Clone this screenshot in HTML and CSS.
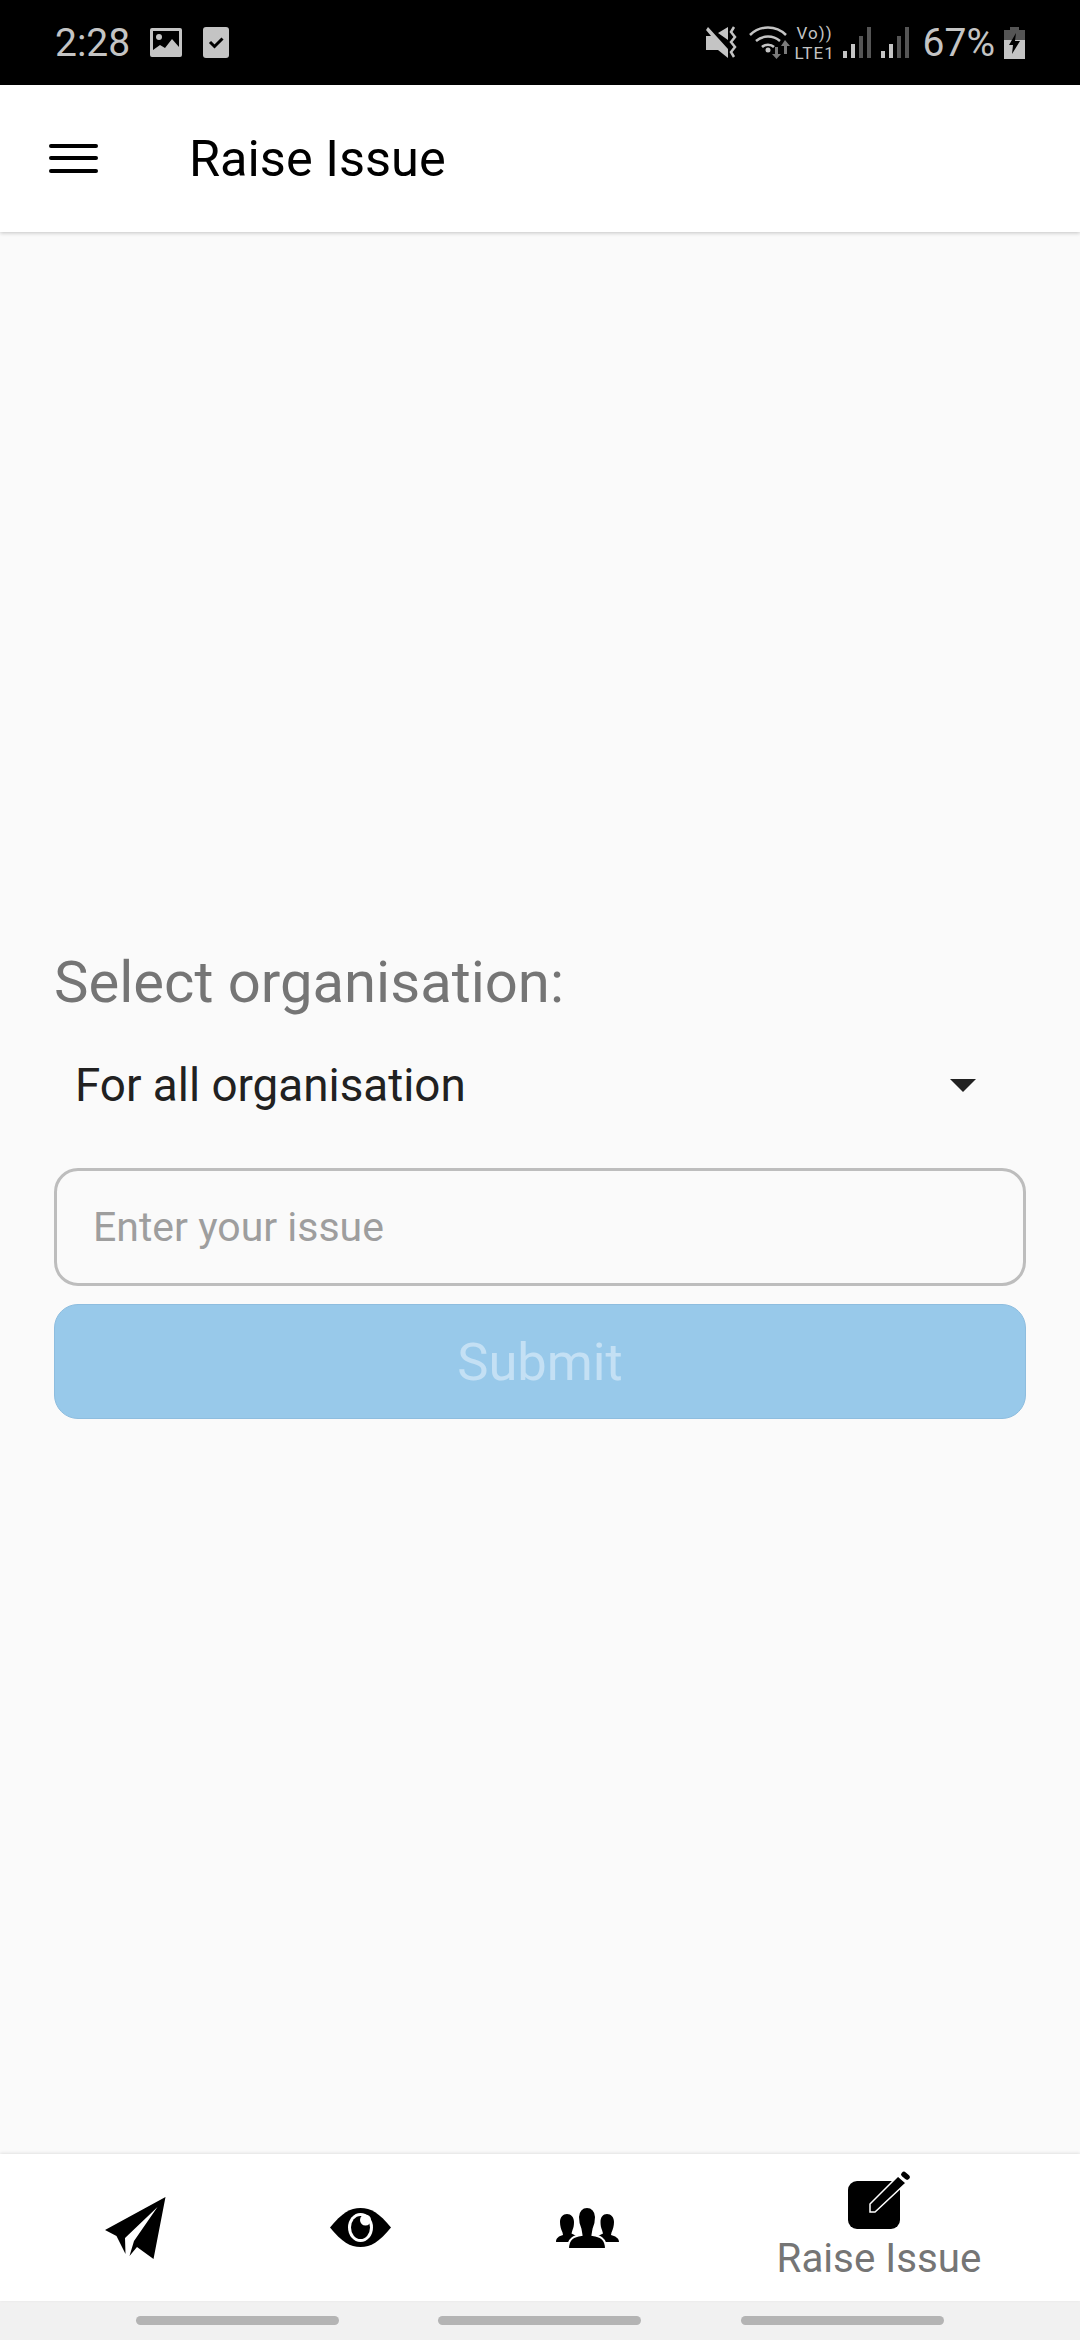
FILE: index.html
```html
<!DOCTYPE html>
<html lang="en">
<head>
  <meta charset="UTF-8">
  <title>Raise Issue</title>
  <meta name="viewport" content="width=device-width, initial-scale=1.0">
  <link rel="stylesheet" href="styles.css">
</head>
<body>

  <div class="status-bar">
    <div class="status-left">
      <span class="time">2:28</span>
      <svg class="ic-image" width="32" height="29" viewBox="0 0 32 29">
        <path fill-rule="evenodd" fill="#c4c4c4" d="M2 0h28a2 2 0 0 1 2 2v25a2 2 0 0 1-2 2H2a2 2 0 0 1-2-2V2a2 2 0 0 1 2-2zM3 3v19l7-5 5 3 7-9 7 8V3z"/>
        <circle cx="9" cy="9" r="3" fill="#c4c4c4"/>
      </svg>
      <svg class="ic-task" width="26" height="31" viewBox="0 0 26 31">
        <rect width="26" height="31" rx="3" fill="#c4c4c4"/>
        <path d="M7 15l4.500 4.500L19.500 11.500" fill="none" stroke="#000" stroke-width="3"/>
      </svg>
    </div>
    <div class="status-right">
      <svg class="ic-mute" width="33" height="33" viewBox="0 0 33 33">
        <path fill="#c4c4c4" d="M2 1l20 22v9l-10-8H0V10h5L0 4zM22 1v13L12 7z"/>
        <path d="M28 1l-3 5 4 5-4 5 4 5-4 5 3 5" fill="none" stroke="#c4c4c4" stroke-width="2.500"/>
      </svg>
      <svg class="ic-wifi" width="42" height="33" viewBox="0 0 42 33">
        <path d="M1 9c10-10 26-10 36 0M7 15c7-6 17-6 24 0M13 21c3-3 9-3 12 0" fill="none" stroke="#c4c4c4" stroke-width="2.500"/>
        <circle cx="19" cy="24" r="2.500" fill="#c4c4c4"/>
        <path fill="#7a7a7a" d="M26 21h3v7h3l-4.500 5-4.500-5h3zM36 14l5 6h-3v8h-3v-8h-3z"/>
      </svg>
      <div class="volte"><span>Vo))</span><span>LTE1</span></div>
      <div class="signal">
        <i class="bar-on bar-1"></i><i class="bar-on bar-2"></i><i class="bar-off bar-3"></i><i class="bar-off bar-4"></i>
      </div>
      <div class="signal">
        <i class="bar-on bar-1"></i><i class="bar-on bar-2"></i><i class="bar-off bar-3"></i><i class="bar-off bar-4"></i>
      </div>
      <span class="battery-text">67%</span>
      <svg class="ic-battery" width="21" height="32" viewBox="0 0 21 32">
        <path fill="#555" d="M6 0h9v3h6v10H0V3h6z"/>
        <path fill="#c4c4c4" d="M0 13h21v19H0z"/>
        <path fill="#000" d="M12 6L5 18h4l-1 9 8-13h-5z"/>
      </svg>
    </div>
  </div>

  <header class="app-bar">
    <div class="menu-icon"><span></span><span></span><span></span></div>
    <h1 class="app-title">Raise Issue</h1>
  </header>

  <main class="content">
    <label class="org-label">Select organisation:</label>
    <div class="org-select">
      <span>For all organisation</span>
      <i class="arrow"></i>
    </div>
    <input class="issue-input" type="text" placeholder="Enter your issue">
    <button class="submit-btn" disabled>Submit</button>
  </main>

  <nav class="bottom-nav">
    <div class="nav-item">
      <svg width="61" height="62" viewBox="0 0 61 62">
        <path d="M60.500 0L0 33l11.500 6 9 18-.5-16L52.500 10 29 44l-4.500 15L32 50l16.500 12z"/>
      </svg>
    </div>
    <div class="nav-item">
      <svg width="61" height="39" viewBox="0 0 61 39">
        <path d="M0 19.500C12 5 20 0 30.500 0S49 5 61 19.500C49 34 41 39 30.500 39S12 34 0 19.500z"/>
        <ellipse cx="30.500" cy="19.500" rx="12.500" ry="14.500" fill="#fff"/>
        <ellipse cx="30.500" cy="19.500" rx="9.500" ry="11.500"/>
        <circle cx="35.500" cy="12" r="5.500" fill="#fff"/>
      </svg>
    </div>
    <div class="nav-item nav-group">
      <svg width="63" height="42" viewBox="0 0 63 42">
        <path d="M11 7c4 0 7 3 7 8 0 3-.5 6-1.500 8l-1 3.500 5 2.500V35H0c0-4 3-6 7-7l-.5-2.500C5 22 4 19 4 15c0-5 3-8 7-8z"/>
        <path d="M51 7c4 0 7 3 7 8 0 4-1 7-2.500 10.500L55 28c4 1 8 3 8 7H42v-6l5-2.500-1-3.500c-1-2-1.500-5-1.500-8 0-5 2.500-8 6.500-8z"/>
        <path d="M31 0c5 0 9 4 9 10 0 5-1 9-2.500 12l-1 6c7 1 13.500 3 13.500 14H12c0-11 6.500-13 13.500-14l-1-6C23 19 22 15 22 10c0-6 4-10 9-10z" stroke="#fff" stroke-width="2"/>
      </svg>
    </div>
    <div class="nav-item nav-active">
      <svg width="63" height="58" viewBox="0 0 63 58">
        <rect x="0" y="10" width="52" height="48" rx="9"/>
        <path d="M22 33L50 5l8 7-31 29h-5z" stroke="#fff" stroke-width="1.500"/>
        <path d="M56 3.500l3 2.500" stroke="#000" stroke-width="5.500" stroke-linecap="round"/>
      </svg>
      <span class="nav-label">Raise Issue</span>
    </div>
  </nav>

  <div class="system-bar">
    <span class="pill pill-1"></span>
    <span class="pill pill-2"></span>
    <span class="pill pill-3"></span>
  </div>

</body>
</html>
```

FILE: styles.css
```css
* {
  box-sizing: border-box;
}

html, body {
  height: 100%;
}

body {
  margin: 0;
  width: 1080px;
  height: 2340px;
  display: flex;
  flex-direction: column;
  background: #fafafa;
  font-family: Roboto, sans-serif;
  overflow: hidden;
}

/* status bar */
.status-bar {
  height: 85px;
  flex: none;
  background: #000;
  color: #c4c4c4;
  display: flex;
  justify-content: space-between;
  align-items: center;
  padding: 0 55px 0 55px;
}

.status-left,
.status-right {
  display: flex;
  align-items: center;
}

.time {
  font-size: 39px;
  line-height: 44px;
}

.ic-image { margin-left: 20px; }
.ic-task { margin-left: 21px; }

.ic-wifi { margin-left: 10px; }

.volte {
  margin-left: 4px;
  width: 40px;
  display: flex;
  flex-direction: column;
  align-items: center;
  font-size: 17px;
  line-height: 20px;
  letter-spacing: 1px;
  white-space: nowrap;
}

.signal {
  height: 31px;
  display: flex;
  align-items: flex-end;
  gap: 4px;
  margin-left: 8px;
  margin-right: 2px;
}

.signal i {
  display: block;
  width: 4px;
}

.bar-on { background: #c4c4c4; }
.bar-off { background: #555; }
.bar-1 { height: 7px; }
.bar-2 { height: 14px; }
.bar-3 { height: 22px; }
.bar-4 { height: 31px; }

.battery-text {
  font-size: 39px;
  line-height: 44px;
  margin-left: 12px;
}

.ic-battery { margin-left: 9px; }

/* app bar */
.app-bar {
  height: 147px;
  flex: none;
  background: #fff;
  display: flex;
  align-items: center;
  padding-left: 49px;
  box-shadow: 0 1px 4px rgba(0,0,0,0.22);
  position: relative;
}

.menu-icon {
  width: 49px;
  display: flex;
  flex-direction: column;
  gap: 8.500px;
  margin-top: -1px;
}

.menu-icon span {
  display: block;
  height: 4px;
  background: #000;
  border-radius: 2px;
}

.app-title {
  margin: 0 0 0 91px;
  font-size: 50.500px;
  font-weight: 400;
  color: #000;
}

/* form */
.content {
  flex: 1;
  display: flex;
  flex-direction: column;
  justify-content: flex-start;
  padding: 717px 54px 0;
}

.org-label {
  font-size: 58px;
  line-height: 66px;
  color: #757575;
}

.org-select {
  margin-top: 26px;
  height: 88px;
  padding: 0 50px 0 21px;
  display: flex;
  justify-content: space-between;
  align-items: center;
  font-size: 45.800px;
  color: #212121;
}

.arrow {
  width: 0;
  height: 0;
  border-left: 13px solid transparent;
  border-right: 13px solid transparent;
  border-top: 13px solid #212121;
}

.issue-input {
  margin-top: 39px;
  width: 100%;
  height: 118px;
  padding: 0 36px;
  background: #fafafa;
  border: 3px solid #bdbdbd;
  border-radius: 24px;
  font-family: Roboto, sans-serif;
  font-size: 41px;
  outline: none;
}

.issue-input::placeholder {
  color: #9e9e9e;
  opacity: 1;
}

.submit-btn {
  margin-top: 18px;
  width: 100%;
  height: 115px;
  padding: 0;
  background: #98c9ea;
  border: 1px solid #8ebddf;
  border-radius: 24px;
  color: #c4e0f4;
  font-family: Roboto, sans-serif;
  font-size: 52.500px;
}

/* bottom nav */
.bottom-nav {
  height: 147px;
  flex: none;
  background: #fff;
  display: grid;
  grid-template-columns: 225px 225px 225px 1fr;
  padding: 0 20px 0 23px;
  box-shadow: 0 -1px 3px rgba(0,0,0,0.10);
  position: relative;
}

.nav-item {
  display: flex;
  flex-direction: column;
  align-items: center;
  justify-content: center;
}

.nav-item svg {
  display: block;
}

.nav-group svg {
  margin-left: 3px;
}

.nav-active {
  justify-content: flex-start;
  padding-top: 17px;
}

.nav-label {
  font-size: 40.300px;
  line-height: 48px;
  color: #757575;
  margin-top: 6px;
}

/* system bar */
.system-bar {
  height: 39px;
  flex: none;
  background: #f1f1f1;
  padding-top: 15px;
  display: flex;
  align-items: flex-start;
}

.pill {
  display: block;
  width: 203px;
  height: 9px;
  background: #b4b4b4;
  border-radius: 5px;
}

.pill-1 { margin-left: 136px; }
.pill-2 { margin-left: 99px; }
.pill-3 { margin-left: 100px; }
```
